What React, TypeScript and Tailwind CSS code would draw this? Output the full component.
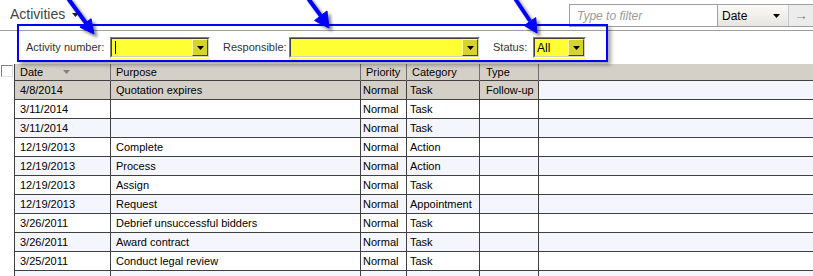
import React from "react";

type Row = { date: string; purpose: string; priority: string; category: string; type: string };

const rows: Row[] = [
  { date: "4/8/2014", purpose: "Quotation expires", priority: "Normal", category: "Task", type: "Follow-up" },
  { date: "3/11/2014", purpose: "", priority: "Normal", category: "Task", type: "" },
  { date: "3/11/2014", purpose: "", priority: "Normal", category: "Task", type: "" },
  { date: "12/19/2013", purpose: "Complete", priority: "Normal", category: "Action", type: "" },
  { date: "12/19/2013", purpose: "Process", priority: "Normal", category: "Action", type: "" },
  { date: "12/19/2013", purpose: "Assign", priority: "Normal", category: "Task", type: "" },
  { date: "12/19/2013", purpose: "Request", priority: "Normal", category: "Appointment", type: "" },
  { date: "3/26/2011", purpose: "Debrief unsuccessful bidders", priority: "Normal", category: "Task", type: "" },
  { date: "3/26/2011", purpose: "Award contract", priority: "Normal", category: "Task", type: "" },
  { date: "3/25/2011", purpose: "Conduct legal review", priority: "Normal", category: "Task", type: "" },
  { date: "3/25/2011", purpose: "Evaluate proposals", priority: "Normal", category: "Task", type: "" },
];

function DropBtn() {
  return (
    <div className="w-[16px] h-full flex items-center justify-center bg-[#d6d42c] border-t border-l border-t-[#fbfb9a] border-l-[#fbfb9a] border-r border-b border-r-[#404040] border-b-[#404040]">
      <svg width="7" height="4" viewBox="0 0 7 4">
        <polygon points="0,0 7,0 3.5,4" fill="#000" />
      </svg>
    </div>
  );
}

function Combo({ width, text, caret }: { width: string; text?: string; caret?: boolean }) {
  return (
    <div className={`${width} h-[21px] flex shrink-0 shadow-[0_3px_0_#ffff60] border border-t-[#808080] border-l-[#808080] border-r-[#ffffff] border-b-[#ffffff]`}>
      <div className="flex-1 flex border border-t-[#404040] border-l-[#404040] border-r-[#d4d0c8] border-b-[#d4d0c8] bg-[#ffff33]">
        <div className="flex-1 flex items-center pl-[2px] text-[12px] text-black">
          {caret ? <div className="w-px h-[13px] bg-black ml-[1px]" /> : text}
        </div>
        <DropBtn />
      </div>
    </div>
  );
}

const gridCols = "grid grid-cols-[96px_250px_46px_73px_59px_1fr]";

export default function App() {
  return (
    <div
      className="w-[813px] h-[276px] overflow-hidden bg-white relative text-[11px] text-black"
      style={{ fontFamily: '"Liberation Sans", Arial, sans-serif' }}
    >
      {/* Top bar */}
      <div className="h-[31px] border-b border-[#a0a0a0] flex items-start justify-between">
        <div className="flex items-center h-[28px] pl-[10px] gap-[7px]">
          <span className="text-[14px] text-[#444]">Activities</span>
          <svg width="7" height="4" viewBox="0 0 7 4" className="mt-[1px]">
            <polygon points="0,0 7,0 3.5,4" fill="#222" />
          </svg>
        </div>
        <div className="mt-[4px] flex h-[23px] w-[244px] border border-[#a0a0a0] border-r-0">
          <div className="w-[147px] flex items-center pl-[7px] italic text-[12px] text-[#9a9a9a] bg-white">
            Type to filter
          </div>
          <div className="w-[71px] flex items-center justify-between pl-[4px] pr-[8px] text-[12px] text-black border-l border-[#a0a0a0] bg-gradient-to-b from-[#fafaf8] to-[#e8e5e0]">
            <span>Date</span>
            <svg width="7" height="4" viewBox="0 0 7 4">
              <polygon points="0,0 7,0 3.5,4" fill="#000" />
            </svg>
          </div>
          <div className="flex-1 flex items-center justify-center border-l border-[#c8c8c8] bg-[#ececec] text-[#8a8a8a] text-[14px]">
            →
          </div>
        </div>
      </div>

      {/* Filter row */}
      <div className="h-[33px] flex items-center pl-[26px] text-[#333]">
        <span className="w-[84px] shrink-0 whitespace-nowrap">Activity number:</span>
        <Combo width="w-[100px]" caret />
        <span className="ml-[13px] w-[66px] shrink-0 whitespace-nowrap">Responsible:</span>
        <Combo width="w-[191px]" />
        <span className="ml-[13px] w-[40px] shrink-0 whitespace-nowrap">Status:</span>
        <Combo width="w-[53px]" text="All" />
      </div>

      {/* Grid */}
      <div className="flex">
        <div className="w-[14px] shrink-0 pt-[1px] pl-[1px]">
          <div className="w-[12px] h-[12px] bg-white border border-t-[#808080] border-l-[#808080] border-r-[#e0e0e0] border-b-[#e0e0e0]" />
        </div>
        <div className="flex-1 border-l border-[#404040]">
          <div className={`${gridCols} h-[17px] bg-[#d4d0c8] border-b border-[#404040]`}>
            <div className="flex items-center pl-[5px] border-r border-[#707070]">
              <span>Date</span>
              <svg width="7" height="4" viewBox="0 0 7 4" className="ml-[20px]">
                <polygon points="0,0 7,0 3.5,4" fill="#808080" />
              </svg>
            </div>
            <div className="flex items-center pl-[5px] border-r border-[#707070]">Purpose</div>
            <div className="flex items-center pl-[5px] border-r border-[#707070]">Priority</div>
            <div className="flex items-center pl-[5px] border-r border-[#707070]">Category</div>
            <div className="flex items-center pl-[6px] border-r border-[#707070]">Type</div>
            <div />
          </div>
          {rows.map((r, i) => {
            const sel = i === 0;
            const rowBg = i % 2 === 0 ? "bg-[#f5f5fe]" : "bg-white";
            const cellBg = sel ? "bg-[#d4d0c8]" : "";
            return (
              <div key={i} className={`${gridCols} h-[19px] border-b border-[#404040] ${rowBg}`}>
                <div className={`flex items-center pl-[5px] border-r border-[#404040] ${cellBg}`}>{r.date}</div>
                <div className={`flex items-center pl-[5px] border-r border-[#404040] ${cellBg}`}>{r.purpose}</div>
                <div className={`flex items-center pl-[2px] border-r border-[#404040] ${cellBg}`}>{r.priority}</div>
                <div className={`flex items-center pl-[3px] border-r border-[#404040] ${cellBg}`}>{r.category}</div>
                <div className={`flex items-center pl-[6px] border-r border-[#404040] ${cellBg}`}>{r.type}</div>
                <div />
              </div>
            );
          })}
        </div>
      </div>

      {/* Annotation: blue highlight box */}
      <div className="absolute left-[17px] top-[24px] w-[591px] h-[38px] border-2 border-[#0000ff] shadow-[3px_3px_4px_rgba(0,0,0,0.35)] pointer-events-none" />

      {/* Annotation arrows */}
      <svg className="absolute left-0 top-0 pointer-events-none" width="813" height="276" viewBox="0 0 813 276">
        <defs>
          <filter id="sh" x="-50%" y="-50%" width="200%" height="200%">
            <feDropShadow dx="3" dy="3" stdDeviation="1.6" floodColor="#000" floodOpacity="0.45" />
          </filter>
        </defs>
        <g filter="url(#sh)" fill="#0000ff" stroke="#0000ff">
          <line x1="67" y1="-3" x2="86" y2="23" strokeWidth="4" />
          <polygon points="94,34 79.9,27.2 91.1,18.7" strokeWidth="1" />
          <line x1="307" y1="-3" x2="321" y2="16" strokeWidth="4" />
          <polygon points="329,28 314.5,20.5 327,11" strokeWidth="1" />
          <line x1="514" y1="-3" x2="530" y2="21" strokeWidth="4" />
          <polygon points="537,33 524.25,25.5 535.75,17.5" strokeWidth="1" />
        </g>
      </svg>
    </div>
  );
}
